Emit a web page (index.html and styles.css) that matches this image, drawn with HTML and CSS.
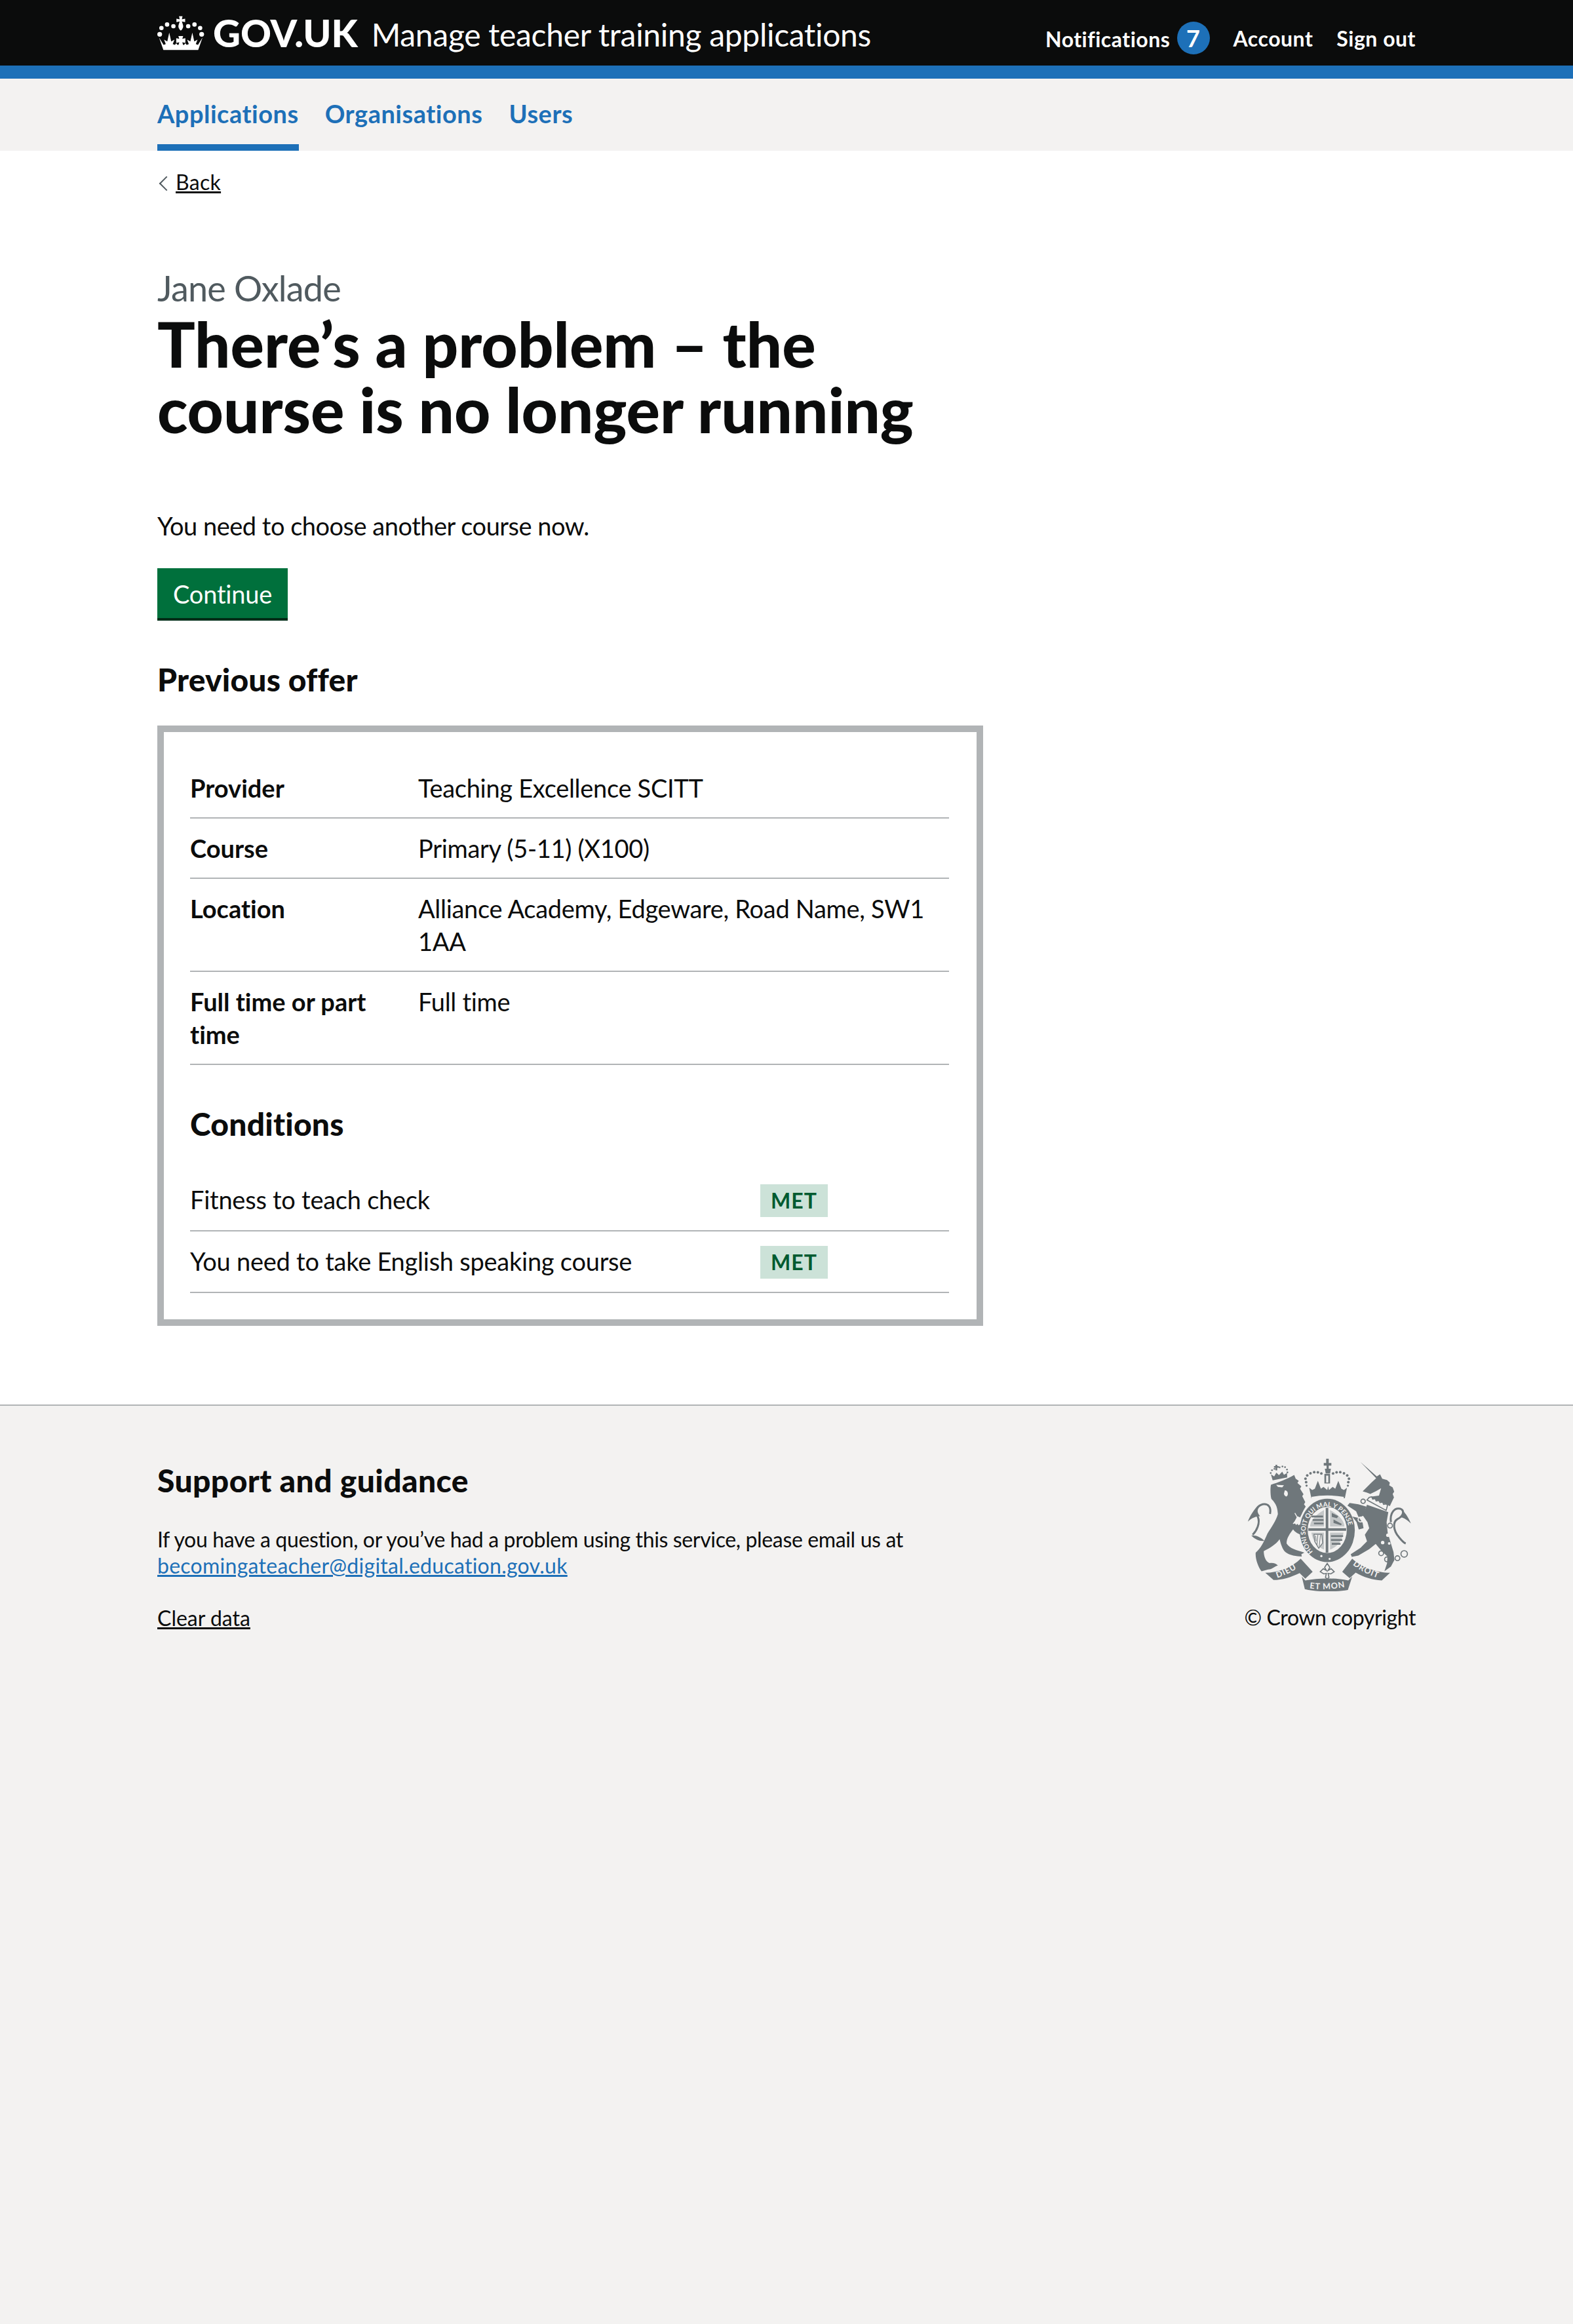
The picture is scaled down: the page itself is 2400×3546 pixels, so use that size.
FILE: index.html
```html
<!DOCTYPE html>
<html lang="en">
<head>
  <meta charset="UTF-8" />
  <title>There's a problem - Manage teacher training applications</title>
  <link rel="stylesheet" href="styles.css">
</head>
<body>

  <header class="topbar">
    <div class="wrap topbar-inner">
      <a href="#" class="logo">
        <svg class="crown" viewBox="60 30 220 165" aria-hidden="true">
          <circle cx="71" cy="118" r="11"/><circle cx="79" cy="89" r="10"/><circle cx="105" cy="73" r="10"/><circle cx="134" cy="81" r="10"/>
          <circle cx="202" cy="81" r="10"/><circle cx="231" cy="73" r="10"/><circle cx="257" cy="89" r="10"/><circle cx="264" cy="118" r="11"/>
          <path d="M160 35h16l-3 14 15-3v16l-15-3 5 16q5 14-10 26q-15-12-10-26l5-16-15 3V46l15 3z"/>
          <path d="M68 133l21 34 10-4-8-20 15 8 9-41 9 41 15-8-8 20 10 4 6-8 6 8h30l6-8 6 8 10-4-8-20 15 8 9-41 9 41 15-8-8 20 10 4 21-34-20 57H88z"/>
          <path d="M157 126h22l-4 13 14-3v22l-14-3 4 13h-22l4-13-14 3v-22l14 3z"/>
        </svg>
        <span class="logo-text">GOV.UK</span>
      </a>
      <a href="#" class="service-name">Manage teacher training applications</a>
      <ul class="user-nav">
        <li><a href="#">Notifications <span class="badge">7</span></a></li>
        <li><a href="#">Account</a></li>
        <li><a href="#">Sign out</a></li>
      </ul>
    </div>
  </header>

  <nav class="primary-nav">
    <div class="wrap primary-nav-inner">
      <a href="#" class="active">Applications</a>
      <a href="#">Organisations</a>
      <a href="#">Users</a>
    </div>
  </nav>

  <main class="wrap page">
    <div class="back"><a href="#">Back</a></div>

    <div class="two-thirds">
      <span class="caption">Jane Oxlade</span>
      <h1>There’s a problem – the course is no longer running</h1>

      <p class="lead">You need to choose another course now.</p>
      <a href="#" class="button">Continue</a>

      <h2 class="offer-title">Previous offer</h2>

      <div class="offer-box">
        <dl class="summary">
          <div class="summary-row"><dt>Provider</dt><dd>Teaching Excellence SCITT</dd></div>
          <div class="summary-row"><dt>Course</dt><dd>Primary (5-11) (X100)</dd></div>
          <div class="summary-row"><dt>Location</dt><dd>Alliance Academy, Edgeware, Road Name, SW1 1AA</dd></div>
          <div class="summary-row"><dt>Full time or part time</dt><dd>Full time</dd></div>
        </dl>

        <h2 class="conditions-title">Conditions</h2>
        <div class="condition"><span class="condition-name">Fitness to teach check</span><strong class="tag">Met</strong></div>
        <div class="condition"><span class="condition-name">You need to take English speaking course</span><strong class="tag">Met</strong></div>
      </div>
    </div>
  </main>

  <footer class="footer">
    <div class="wrap footer-inner">
      <div class="footer-main">
        <h2>Support and guidance</h2>
        <p>If you have a question, or you’ve had a problem using this service, please email us at <a href="#" class="blue">becomingateacher@digital.education.gov.uk</a></p>
        <a href="#">Clear data</a>
      </div>
      <div class="footer-meta">
        <svg class="crest" viewBox="130 78 752 612" aria-hidden="true">
          <defs>
            <path id="garter" d="M436 512A100 118 0 1 1 558 512"/>
            <path id="ribbon-l" d="M262 630Q320 612 376 572"/>
            <path id="ribbon-m" d="M412 676Q490 688 584 670"/>
            <path id="ribbon-r" d="M612 566Q660 606 738 632"/>
          </defs>

          <!-- lion -->
          <path d="M238 200C270 190 310 175 345 155L352 172L366 182L360 192L378 208L372 218L388 244L382 252L396 280L390 290L398 300C385 320 378 340 372 350L360 345C350 360 345 375 340 380C355 375 375 385 392 395L398 425L375 430C365 425 350 420 340 405C325 425 310 445 310 470C325 495 355 500 392 512L378 520L380 530C355 530 325 525 305 510C290 495 283 470 278 450C260 475 235 490 205 505C205 530 215 555 232 560C250 558 262 562 270 572C255 575 245 590 225 590L195 598C180 580 165 540 168 512C190 495 205 465 222 425C240 395 262 365 270 335C268 310 265 290 240 265C235 245 235 215 238 200Z"/>
          <path class="crest-light" d="M262 200l36 2-8 10-20-2zM302 226q12 0 14 14q0 12-8 14q-10-4-10-14z"/>
          <path class="crest-cut" d="M348 330l38 66M340 380l8-10 6 12 8-8 4 12"/>
          <path d="M246 180l-8-28 15 10 10-18 12 12 15-16 8 14 14-8 1 20z"/>
          <path d="M259 108h8v6h7v8h-7v12h-8v-12h-7v-8h7z"/>
          <g class="crest-dots">
            <circle cx="237" cy="146" r="4"/><circle cx="243" cy="133" r="4"/><circle cx="254" cy="127" r="4"/><circle cx="278" cy="120" r="4"/><circle cx="291" cy="116" r="4"/><circle cx="303" cy="119" r="4"/><circle cx="312" cy="130" r="4"/><circle cx="314" cy="143" r="4"/>
          </g>
          <path class="crest-stroke" d="M234 334C240 302 226 286 200 290C174 296 164 322 178 348C190 376 172 412 154 430"/>
          <path d="M178 296C162 312 140 345 132 370C150 352 170 345 188 345C176 330 172 314 178 296Z"/>
          <path d="M148 434C165 430 190 440 208 458C188 462 165 452 148 434Z"/>

          <!-- crown over the shield -->
          <path d="M481 100h11V80h12v20h12v12h-12v14h10l-4 22h-20l-4-22h8v-14h-13z"/>
          <g class="crest-dots">
            <circle cx="400" cy="188" r="6"/><circle cx="397" cy="172" r="6"/><circle cx="405" cy="157" r="6"/><circle cx="420" cy="147" r="6"/><circle cx="437" cy="142" r="6"/><circle cx="454" cy="143" r="6"/><circle cx="470" cy="148" r="6"/>
            <circle cx="524" cy="148" r="6"/><circle cx="540" cy="143" r="6"/><circle cx="557" cy="142" r="6"/><circle cx="574" cy="147" r="6"/><circle cx="589" cy="157" r="6"/><circle cx="597" cy="172" r="6"/><circle cx="594" cy="188" r="6"/>
            <circle cx="402" cy="204" r="5"/><circle cx="592" cy="204" r="5"/>
          </g>
          <path d="M484 150h26v44h-26z"/>
          <path class="crest-light" d="M492 158h10v32h-10z"/>
          <path d="M414 214l14 10 12-6 14-36 14 36 12-8 17 14 4-18 4 18 17-14 12 8 14-36 14 36 12 6 14-10-10 48H424z"/>
          <path class="crest-light" d="M424 256q72-14 150 0l-4 14q-70-12-142 0z"/>

          <!-- garter and shield -->
          <ellipse cx="497" cy="410" rx="127" ry="146"/>
          <ellipse cx="497" cy="408" rx="90" ry="106" class="crest-light"/>
          <text class="crest-motto crest-garter"><textPath href="#garter" startOffset="1%">HONI SOIT QUI MAL Y PENSE</textPath></text>
          <path d="M490 306h12v206h-12zM410 400h174v12H410z"/>
          <path class="crest-quarter" d="M418 392q2-40 64-76v76zM510 316q64 36 66 76h-66zM424 420h58v78q-48-20-58-78zM510 420h62q-10 58-62 78z"/>
          <path d="M424 342h54v8h-54zM430 358h50v8h-50zM436 374h44v8h-44zM518 330l30 14-6 10-24-6zM526 360l38 20-4 6-34-10zM514 432h56v8h-56zM514 450h52v8h-52zM518 468h40v8h-40z"/>
          <path class="crest-harp" d="M436 428h36l4 40-18 24-18-30z"/>
          <path class="crest-line" d="M466 430l-6 54M454 430l-4 46M444 434l2 26"/>
          <path d="M430 506q70 42 140 0l4 14q-70 48-148 4z"/>
          <circle cx="470" cy="528" r="5" class="crest-light"/><circle cx="508" cy="541" r="5" class="crest-light"/>

          <!-- unicorn -->
          <path d="M650 95L725 162L740 152L750 172L772 178L785 190L782 202L798 212L805 232L798 242L804 258L785 298L690 256L735 250L745 216L720 230L695 242L680 236L660 230L700 190L722 170Z"/>
          <path class="crest-dark-outline" d="M690 258l12-2 4 10 12-2 4 10 12-2 6 10 12-2 4 10 14-2 4 8-6 22-88-48z"/>
          <path d="M680 292L778 326L770 372L775 420L790 470L802 510L806 546L790 576L760 598L772 562L774 530L745 502L720 472L690 496L640 526L610 532L605 520L650 490L680 460L670 430L690 400L682 372L660 340Z"/>
          <path d="M676 300L640 290L600 284L590 296L630 322L640 346L660 376L664 400L642 406L632 372L612 346L640 352L664 342Z"/>
          <circle cx="662" cy="276" r="10" class="crest-ring"/><circle cx="650" cy="360" r="11" class="crest-ring-light"/><circle cx="786" cy="388" r="11" class="crest-ring"/>
          <circle cx="745" cy="515" r="11" class="crest-ring"/><circle cx="772" cy="543" r="11" class="crest-ring"/><circle cx="820" cy="538" r="11" class="crest-ring"/><circle cx="851" cy="518" r="15" class="crest-ring"/>
          <circle cx="776" cy="432" r="8" class="crest-light"/><circle cx="752" cy="466" r="8" class="crest-light"/><circle cx="782" cy="470" r="6" class="crest-light"/>
          <path class="crest-stroke" d="M790 372C784 330 806 304 832 310C856 318 846 346 820 358C796 372 802 412 826 440C836 452 846 466 858 470"/>
          <path d="M832 308C852 322 870 350 882 378C866 362 850 352 836 350C846 338 846 322 832 308Z"/>

          <!-- motto scroll -->
          <path d="M212 605C270 605 335 580 375 540L430 600L396 632L370 606C330 625 290 638 250 638Z"/>
          <path d="M786 605C728 605 655 580 612 540L566 600L600 630L628 604C664 625 705 638 748 640Z"/>
          <path d="M380 622L396 640C460 628 530 628 594 640L612 622L592 684C530 694 450 694 394 680Z"/>
          <path class="crest-fleur" d="M497 562l12 18-8 14 14-8 14 14-16 10-12-2 4 18-8 8-8-8 4-18-12 2-16-10 14-14 14 8-8-14z"/>
          <text class="crest-motto crest-scroll"><textPath href="#ribbon-l" startOffset="4%">DIEU</textPath></text>
          <text class="crest-motto crest-scroll"><textPath href="#ribbon-m" startOffset="2%">ET MON</textPath></text>
          <text class="crest-motto crest-scroll"><textPath href="#ribbon-r" startOffset="2%">DROIT</textPath></text>
        </svg>
        <a href="#" class="copyright">© Crown copyright</a>
      </div>
    </div>
  </footer>

</body>
</html>
```
FILE: styles.css
```css
* { box-sizing: border-box; }

html {
  background-color: #f3f2f1;
}

body {
  display: flex;
  flex-direction: column;
  margin: 0;
  min-height: 100vh;
  background-color: #fff;
  color: #0b0c0c;
  font-family: "Lato", "Noto Sans", sans-serif;
  font-size: 38px;
  font-variant-ligatures: none;
  line-height: 50px;
}

a {
  color: inherit;
}

.wrap {
  width: 1920px;
  margin: 0 auto;
}

/* Top bar */
.topbar {
  background-color: #0b0c0c;
  border-bottom: 20px solid #1d70b8;
  color: #fff;
}

.topbar-inner {
  display: flex;
  align-items: center;
  height: 100px;
}

.topbar a {
  text-decoration: none;
}

.logo {
  display: flex;
  align-items: center;
  gap: 12px;
  margin-right: 21px;
}

.crown {
  width: 73px;
  height: 55px;
  fill: #fff;
}

.logo-text {
  font-size: 58px;
  font-weight: 900;
  line-height: 60px;
}

.service-name {
  padding-top: 6px;
  font-size: 48px;
  letter-spacing: -0.3px;
}

.user-nav {
  display: flex;
  align-items: center;
  gap: 36px;
  margin: 0 0 0 auto;
  padding: 18px 0 0;
  list-style: none;
  font-size: 32px;
  font-weight: 700;
  letter-spacing: 0.5px;
}

.badge {
  display: inline-block;
  width: 50px;
  height: 50px;
  margin-left: 2px;
  border-radius: 50%;
  background-color: #1d70b8;
  text-align: center;
  font-size: 36px;
  line-height: 50px;
}

/* Primary nav */
.primary-nav {
  background-color: #f3f2f1;
}

.primary-nav-inner {
  display: flex;
  gap: 40px;
  height: 110px;
}

.primary-nav a {
  padding-top: 28px;
  color: #1d70b8;
  font-weight: 700;
  letter-spacing: 0.5px;
  text-decoration: none;
}

.primary-nav a.active {
  border-bottom: 10px solid #1d70b8;
}

/* Page */
.page {
  padding-bottom: 120px;
}

.back {
  margin-top: 28px;
  padding-left: 28px;
  position: relative;
  font-size: 32px;
  line-height: 40px;
  letter-spacing: 0.3px;
}

.back::before {
  content: "";
  position: absolute;
  left: 6px;
  top: 14px;
  width: 14px;
  height: 14px;
  border-left: 2px solid #505a5f;
  border-bottom: 2px solid #505a5f;
  transform: rotate(45deg);
}

.two-thirds {
  width: 1260px;
  margin-top: 112px;
}

.caption {
  display: block;
  margin-bottom: 4px;
  color: #505a5f;
  font-size: 54px;
  line-height: 60px;
  letter-spacing: -0.8px;
}

h1 {
  margin: 0 0 103px;
  font-size: 96px;
  font-weight: 900;
  line-height: 100px;
}

.lead {
  margin: 0 0 40px;
  letter-spacing: -0.5px;
}

.button {
  display: inline-block;
  padding: 14px 24px 12px;
  background-color: #00703c;
  box-shadow: 0 4px 0 #002d18;
  color: #fff;
  letter-spacing: -0.2px;
  text-decoration: none;
}

h2 {
  margin: 0;
  font-size: 48px;
  font-weight: 900;
  line-height: 60px;
  letter-spacing: 0.2px;
}

.offer-title {
  margin: 64px 0 40px;
}

.offer-box {
  padding: 40px 42px 40px 40px;
  border: 10px solid #b1b4b6;
}

.summary {
  margin: 0;
}

.summary-row {
  display: flex;
  padding: 20px 0;
  border-bottom: 2px solid #b1b4b6;
}

.summary dt {
  width: 348px;
  padding-right: 40px;
  font-weight: 700;
}

.summary dd {
  flex: 1;
  margin: 0;
  letter-spacing: -0.3px;
}

.conditions-title {
  margin: 60px 0 40px;
}

.condition {
  display: flex;
  align-items: flex-start;
  padding: 22px 0 20px;
  border-bottom: 2px solid #b1b4b6;
}

.condition-name {
  width: 870px;
  line-height: 46px;
  letter-spacing: -0.25px;
}

.tag {
  padding: 0 16px;
  background-color: #cce2d8;
  color: #005a30;
  font-size: 32px;
  font-weight: 700;
  line-height: 50px;
  letter-spacing: 1px;
  text-transform: uppercase;
}

/* Footer */
.footer {
  flex: 1;
  background-color: #f3f2f1;
  border-top: 2px solid #b1b4b6;
  font-size: 32px;
  line-height: 40px;
}

.footer-inner {
  display: flex;
  justify-content: space-between;
  padding-top: 84px;
}

.footer-main {
  width: 1180px;
}

.footer-main h2 {
  margin-bottom: 40px;
  letter-spacing: 0.4px;
}

.footer-main p {
  margin: 0 0 40px;
  letter-spacing: -0.36px;
}

.blue {
  color: #1d70b8;
  letter-spacing: 0.27px;
}

.footer-meta {
  display: flex;
  flex-direction: column;
  align-items: flex-end;
}

.crest {
  width: 250px;
  height: 203px;
  margin: -4px 7px 20px 0;
  fill: #6f777b;
}

.crest .crest-light {
  fill: #f3f2f1;
}

.crest .crest-quarter {
  fill: #c4c7c8;
}

.crest .crest-harp {
  fill: #f3f2f1;
  stroke: #6f777b;
  stroke-width: 4;
}

.crest .crest-line {
  fill: none;
  stroke: #6f777b;
  stroke-width: 3;
}

.crest .crest-stroke {
  fill: none;
  stroke: #6f777b;
  stroke-width: 9;
}

.crest .crest-cut {
  fill: none;
  stroke: #f3f2f1;
  stroke-width: 4;
}

.crest .crest-fleur {
  fill: #f3f2f1;
  stroke: #6f777b;
  stroke-width: 5;
}

.crest .crest-dark-outline {
  fill: #f3f2f1;
  stroke: #6f777b;
  stroke-width: 5;
}

.crest .crest-ring {
  fill: none;
  stroke: #6f777b;
  stroke-width: 5;
}

.crest .crest-ring-light {
  fill: none;
  stroke: #f3f2f1;
  stroke-width: 5;
}

.crest-motto {
  fill: #f3f2f1;
  font-size: 34px;
  font-weight: 700;
}

.crest-garter {
  font-size: 30px;
}

.crest-scroll {
  font-size: 38px;
  letter-spacing: 3px;
}

.copyright {
  letter-spacing: -0.4px;
  text-decoration: none;
}
```
